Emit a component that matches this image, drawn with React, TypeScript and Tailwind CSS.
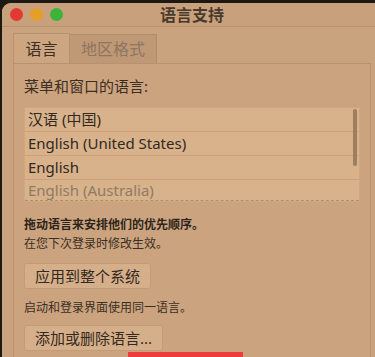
import React from 'react'

const font = { fontFamily: '"Noto Sans", "Noto Sans CJK SC", sans-serif' }

const languages = [
    { name: '汉语 (中国)', dim: false },
    { name: 'English (United States)', dim: false },
    { name: 'English', dim: false },
    { name: 'English (Australia)', dim: true },
]

const App: React.FC = () => {
    return (
        <div className="w-[375px] h-[357px] bg-[#1d1814] overflow-hidden pt-[3px] pl-[2px]" style={font}>
            <div className="relative h-[354px] bg-[#c9a27e] rounded-tl-[9px] overflow-hidden">
                {/* title bar */}
                <div className="h-[24px] flex items-center border-b border-[#b8916f] bg-[#c8a07c]">
                    <div className="flex items-center gap-[7px] pl-[8px]">
                        <span className="w-[13px] h-[13px] rounded-full bg-[#e23a33]"></span>
                        <span className="w-[13px] h-[13px] rounded-full bg-[#e59e27]"></span>
                        <span className="w-[13px] h-[13px] rounded-full bg-[#3cb43c]"></span>
                    </div>
                    <div className="flex-1 text-center pr-[54px] text-[16px] font-bold text-[#4a3a2d]">语言支持</div>
                </div>

                {/* tabs */}
                <div className="pl-[11px] pt-[6px]">
                    <div className="flex items-end h-[30px]">
                        <div className="w-[57px] h-[30px] flex items-center justify-center text-[16px] text-[#3b2e23] bg-[#cda681] border border-b-0 border-[#b69273]">
                            语言
                        </div>
                        <div className="w-[87px] h-[29px] flex items-center justify-center text-[16px] text-[#8d7660] bg-[#bf9876] border border-l-0 border-b-0 border-[#b08c6c]">
                            地区格式
                        </div>
                    </div>

                    <div className="w-[358px] h-[300px] border border-[#b69273] bg-[#cba47f] px-[10px] pt-[12px]">
                        <div className="text-[15px] text-[#3b2e23] leading-[20px]">菜单和窗口的语言:</div>

                        <div className="relative mt-[11px] w-[336px] bg-[#d8b28b] border border-[#cfa882]">
                            {languages.map((lang, i) => (
                                <div
                                    key={lang.name}
                                    className={`flex items-center pl-[3px] text-[15px] ${lang.dim ? 'text-[#8f7a64] border-b border-dashed border-[#b0906f]' : 'text-[#33281f] border-b border-[#c9a27c]'} ${i === 3 ? 'h-[21px]' : 'h-[24px]'}`}
                                >
                                    {lang.name}
                                </div>
                            ))}
                            <div className="absolute right-[2px] top-[1px] w-[4px] h-[57px] rounded-sm bg-[#9e7d60]"></div>
                        </div>

                        <div className="mt-[13px] text-[12px] font-bold text-[#2e241b] leading-[19px]">拖动语言来安排他们的优先顺序。</div>
                        <div className="text-[12px] text-[#3b2e23] leading-[19px]">在您下次登录时修改生效。</div>

                        <button className="mt-[10px] h-[26px] px-[10px] rounded-[3px] bg-[#d5af89] border border-[#c29c79] text-[15px] text-[#35291f] leading-none">
                            应用到整个系统
                        </button>

                        <div className="mt-[9px] text-[12px] text-[#3b2e23] leading-[19px]">启动和登录界面使用同一语言。</div>

                        <button className="mt-[8px] h-[26px] px-[10px] rounded-[3px] bg-[#d5af89] border border-[#c29c79] text-[15px] text-[#35291f] leading-none">
                            添加或删除语言...
                        </button>
                    </div>
                </div>

                <div className="absolute left-[126px] bottom-0 w-[115px] h-[5px] bg-[#ee3c3c]"></div>
            </div>
        </div>
    )
}

export default App
